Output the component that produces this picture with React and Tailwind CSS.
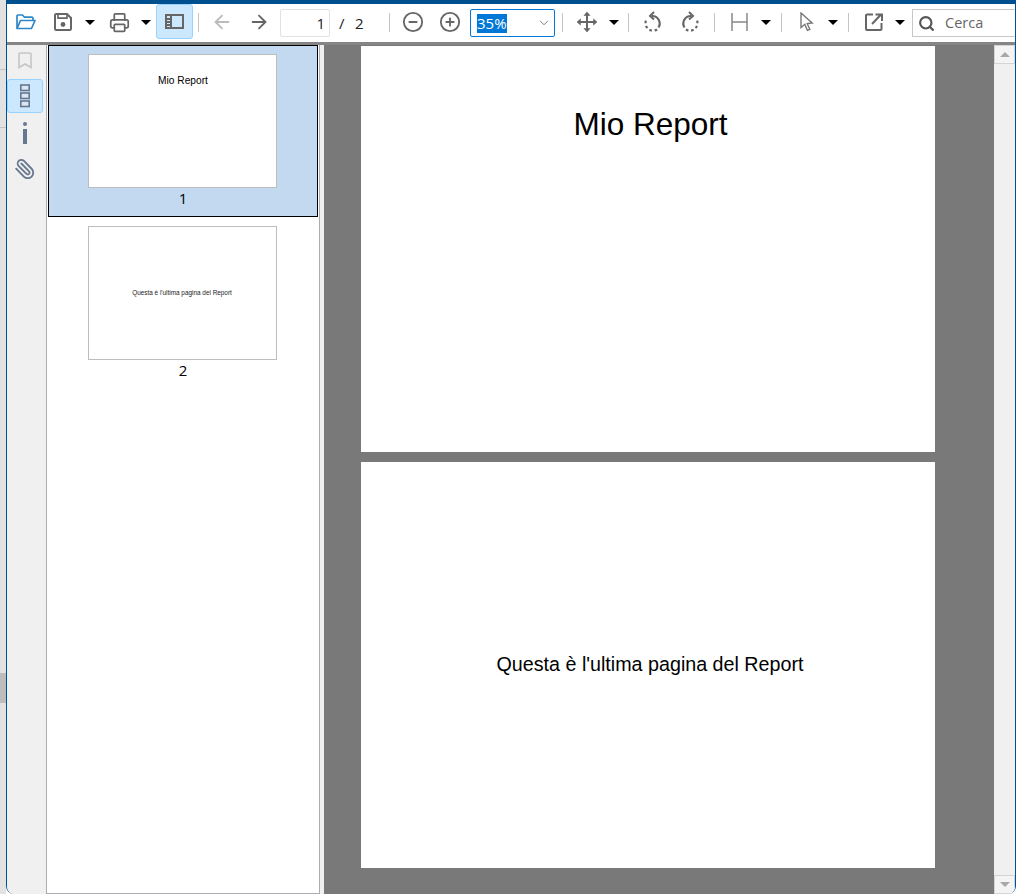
import {
  ArrowLeft,
  ArrowRight,
  ChevronDown,
  CircleMinus,
  CirclePlus,
  Paperclip,
  Printer,
  Search,
} from "lucide-react"

function Caret({ className = "" }) {
  return (
    <div className={`flex h-full w-4 items-center justify-center pb-[2px] ${className}`}>
      <div className="h-0 w-0 border-x-[5px] border-t-[5px] border-x-transparent border-t-black"></div>
    </div>
  )
}

function Sep({ className = "" }) {
  return <div className={`mb-px h-[19px] w-px bg-[#c4c4c4] ${className}`}></div>
}

function Tool({ children, className = "" }) {
  return <div className={`flex h-full items-center justify-center pb-[2px] ${className}`}>{children}</div>
}

function FolderIcon() {
  return (
    <svg width="20" height="16" viewBox="0 0 20 16" fill="none" stroke="#2f86c6" strokeWidth="1.7" strokeLinejoin="round">
      <path d="M1 14V2a1 1 0 0 1 1-1h4.5l2 2.2H16a1 1 0 0 1 1 1V6" />
      <path d="M1 14.5h14.5L19 6.5H4.5z" />
    </svg>
  )
}

function SaveIcon() {
  return (
    <svg width="18" height="18" viewBox="0 0 18 18" fill="none" stroke="#666" strokeWidth="2">
      <path d="M1 2.2A1.2 1.2 0 0 1 2.2 1H13l4 4v10.8a1.2 1.2 0 0 1-1.2 1.2H2.2A1.2 1.2 0 0 1 1 15.8z" />
      <path d="M4 1.5v3.6h9V1.5" strokeWidth="1.6" />
      <circle cx="9" cy="11.5" r="2.4" fill="#666" stroke="none" />
    </svg>
  )
}

function PanelIcon() {
  return (
    <svg width="19" height="15" viewBox="0 0 19 15" fill="none" stroke="#666" strokeWidth="2">
      <rect x="1" y="1" width="17" height="13" />
      <path d="M6 1v13" />
      <path d="M2 5h3M2 8h3M2 11h3" strokeWidth="1.8" />
    </svg>
  )
}

function MoveIcon() {
  return (
    <svg width="22" height="22" viewBox="0 0 22 22" fill="#666" stroke="#666" strokeWidth="2">
      <path d="M3 11h16M11 3v16" fill="none" />
      <path d="M11 1l3 3.5H8zM11 21l3-3.5H8zM1 11l3.5-3v6zM21 11l-3.5-3v6z" strokeWidth="0.6" />
    </svg>
  )
}

function RotateLeft() {
  return (
    <svg width="20" height="22" viewBox="0 0 20 22" fill="none" stroke="#666" strokeWidth="2.2">
      <path d="M9 5a7.5 7.5 0 0 1 6.5 11.5" />
      <path d="M11 1L7 5l4 3.5" strokeWidth="2" />
      <path d="M14 18.5a7.5 7.5 0 0 1-11-9" strokeDasharray="2.6 2.6" />
    </svg>
  )
}

function RotateRight() {
  return (
    <svg width="20" height="22" viewBox="0 0 20 22" fill="none" stroke="#666" strokeWidth="2.2">
      <path d="M11 5a7.5 7.5 0 0 0-6.5 11.5" />
      <path d="M9 1l4 4-4 3.5" strokeWidth="2" />
      <path d="M6 18.5a7.5 7.5 0 0 0 11-9" strokeDasharray="2.6 2.6" />
    </svg>
  )
}

function FitIcon() {
  return (
    <svg width="17" height="18" viewBox="0 0 17 18" fill="none" stroke="#888" strokeWidth="1.5">
      <path d="M1 0v18M16 0v18M1 9h15" />
    </svg>
  )
}

function CursorIcon() {
  return (
    <svg width="18" height="20" viewBox="0 0 18 20" fill="none" stroke="#777" strokeWidth="1.4">
      <path d="M3 1v14.5l3.8-3.2 2.6 6 2.4-1-2.6-5.8 5-.5z" />
    </svg>
  )
}

function ExternalIcon() {
  return (
    <svg width="18" height="18" viewBox="0 0 18 18" fill="none" stroke="#666" strokeWidth="2">
      <path d="M8 1.5H2a1 1 0 0 0-1 1V16a1 1 0 0 0 1 1h13.5a1 1 0 0 0 1-1v-6" />
      <path d="M7 11l9-9.5M10.5 1.5H17V8" />
    </svg>
  )
}

function BookmarkIcon() {
  return (
    <svg width="14" height="17" viewBox="0 0 14 17" fill="none" stroke="#c6c6c6" strokeWidth="1.6">
      <path d="M1 2a1 1 0 0 1 1-1h10a1 1 0 0 1 1 1v13.5l-6-3.5-6 3.5z" />
    </svg>
  )
}

function ThumbsIcon() {
  return (
    <svg width="12" height="24" viewBox="0 0 12 24" fill="none" stroke="#66788f" strokeWidth="1.6">
      <rect x="1.8" y="1" width="8.4" height="5.5" fill="#dbe6f2" />
      <rect x="1.8" y="9" width="8.4" height="5.5" fill="#dbe6f2" />
      <rect x="1.8" y="17" width="8.4" height="5.5" fill="#dbe6f2" />
    </svg>
  )
}

function Thumb({ children, top }) {
  return (
    <div className={`flex h-[134px] w-[189px] justify-center border border-[#bdbdbd] bg-white ${top ? "items-start pt-[19px]" : "items-center"}`}>
      {children}
    </div>
  )
}

function Toolbar() {
  return (
    <div className="flex h-[38px] items-center bg-white text-[#222]">
      <Tool className="w-[37px]"><FolderIcon /></Tool>
      <Tool className="w-[38px]"><SaveIcon /></Tool>
      <Caret />
      <Tool className="ml-[2px] w-[38px]"><Printer size={21} strokeWidth={2} color="#666" /></Tool>
      <Caret />
      <div className="mb-[3px] ml-[2px] flex h-[35px] w-[37px] items-center justify-center rounded-[3px] border border-[#99d1ff] bg-[#cce8ff]">
        <PanelIcon />
      </div>
      <Sep className="ml-[5px]" />
      <Tool className="ml-[5px] w-[36px]"><ArrowLeft size={22} strokeWidth={2} color="#bcbcbc" /></Tool>
      <Tool className="ml-px w-[36px]"><ArrowRight size={22} strokeWidth={2} color="#666" /></Tool>
      <div className="ml-[3px] h-[28px] w-[50px] rounded-[2px] border border-[#e2e2e2] pr-[4px] text-right text-[15px] leading-[26px]">1</div>
      <span className="ml-[9px] w-[16px] text-[15px]">/</span>
      <span className="w-[34px] text-[15px]">2</span>
      <Sep />
      <Tool className="ml-[4px] w-[37px]"><CircleMinus size={22} strokeWidth={2} color="#666" /></Tool>
      <Tool className="w-[37px]"><CirclePlus size={22} strokeWidth={2} color="#666" /></Tool>
      <div className="ml-[2px] flex h-[28px] w-[85px] items-center rounded-[2px] border border-[#0078d7] pl-[6px] pr-[3px]">
        <span className="bg-[#0078d7] text-[15px] leading-[19px] text-white">35%</span>
        <ChevronDown size={14} strokeWidth={1.5} color="#666" className="ml-auto" />
      </div>
      <Sep className="ml-[7px]" />
      <Tool className="ml-[5px] w-[38px]"><MoveIcon /></Tool>
      <Caret />
      <Sep className="ml-[6px]" />
      <Tool className="ml-[6px] w-[36px]"><RotateLeft /></Tool>
      <Tool className="w-[37px]"><RotateRight /></Tool>
      <Sep className="ml-[6px]" />
      <Tool className="ml-[6px] w-[37px]"><FitIcon /></Tool>
      <Caret />
      <Sep className="ml-[7px]" />
      <Tool className="ml-[6px] w-[37px]"><CursorIcon /></Tool>
      <Caret />
      <Sep className="ml-[7px]" />
      <Tool className="ml-[6px] w-[37px]"><ExternalIcon /></Tool>
      <Caret />
      <div className="ml-[4px] flex h-[28px] flex-1 items-center border border-y-[#c8c8c8] border-l-[#c8c8c8] border-r-transparent pl-[5px]">
        <Search size={17} strokeWidth={3} color="#555" />
        <span className="ml-[10px] text-[14.5px] text-[#666]">Cerca</span>
      </div>
    </div>
  )
}

function Sidebar() {
  return (
    <div className="flex w-[39px] flex-none flex-col items-center bg-[#f0f0f0] pr-[3px]">
      <div className="flex h-[30px] items-center justify-center">
        <BookmarkIcon />
      </div>
      <div className="mt-[4px] flex h-[34px] w-[36px] flex-none items-center justify-center rounded-[3px] border border-[#99d1ff] bg-[#cce8ff]">
        <ThumbsIcon />
      </div>
      <div className="mt-[9px] flex flex-col items-center">
        <div className="h-[4px] w-[4px] rounded-full bg-[#66788f]"></div>
        <div className="mt-[3px] h-[15px] w-[4px] bg-[#66788f]"></div>
      </div>
      <div className="mt-[14px]">
        <Paperclip size={22} strokeWidth={2} color="#66788f" className="-scale-x-100" />
      </div>
    </div>
  )
}

function ThumbPane() {
  return (
    <div className="flex w-[274px] flex-none flex-col border-x border-b border-[#acacb4] bg-white px-px">
      <div className="flex h-[172px] flex-none flex-col items-center border border-black bg-[#c2d9f0] pr-[2px] pt-[8px]">
        <Thumb top>
          <span className="ml-[2px] font-['Liberation_Sans'] text-[10.2px] leading-[14px] text-black">Mio Report</span>
        </Thumb>
        <div className="ml-[2px] text-[15px] leading-[21px] text-black">1</div>
      </div>
      <div className="flex flex-col items-center pr-[2px] pt-[9px]">
        <Thumb>
          <span className="font-['Liberation_Sans'] text-[6.4px] text-[#222]">Questa è l'ultima pagina del Report</span>
        </Thumb>
        <div className="ml-[2px] text-[15px] leading-[21px] text-black">2</div>
      </div>
    </div>
  )
}

function Viewer() {
  return (
    <div className="flex min-w-0 flex-1 flex-col overflow-hidden bg-[#797979] pl-[37px] pt-px">
      <div className="flex h-[406px] w-[574px] flex-none justify-center bg-white pl-[5px] pt-[54px]">
        <span className="font-['Liberation_Sans'] text-[31.5px] leading-[48px] text-black">Mio Report</span>
      </div>
      <div className="mt-[10px] flex h-[406px] w-[574px] flex-none items-center justify-center bg-white pl-[4px]">
        <span className="font-['Liberation_Sans'] text-[19.7px] text-black">Questa è l'ultima pagina del Report</span>
      </div>
    </div>
  )
}

function Scrollbar() {
  return (
    <div className="flex w-[21px] flex-none flex-col justify-between bg-[#f0f0f0]">
      <div className="flex h-[19px] items-center justify-center border border-[#d4d4d4] bg-[#f4f4f4]">
        <div className="h-0 w-0 border-x-[5px] border-b-[5px] border-x-transparent border-b-[#a8a8a8]"></div>
      </div>
      <div className="flex h-[19px] items-center justify-center border border-[#d4d4d4] bg-[#f4f4f4]">
        <div className="h-0 w-0 border-x-[5px] border-t-[5px] border-x-transparent border-t-[#a8a8a8]"></div>
      </div>
    </div>
  )
}

export default function App() {
  return (
    <div className="flex h-[894px] w-[1016px] overflow-hidden bg-white font-['Open_Sans','Liberation_Sans',sans-serif]">
      <div className="flex w-[6px] flex-none flex-col bg-[#e2e2e2]">
        <div className="mt-[69px] h-px flex-none bg-[#c4c4c4]"></div>
        <div className="mt-[57px] h-px flex-none bg-[#c4c4c4]"></div>
        <div className="mt-[545px] h-[30px] flex-none bg-[#bdbdbd]"></div>
      </div>
      <div className="flex min-w-0 flex-1 flex-col overflow-hidden rounded-b-[8px] border-x border-t-4 border-[#00508f] bg-[#f0f0f0]">
        <Toolbar />
        <div className="h-[3px] flex-none bg-[#858585]"></div>
        <div className="flex min-h-0 flex-1">
          <Sidebar />
          <ThumbPane />
          <div className="w-[4px] flex-none bg-[#f0f0f0]"></div>
          <Viewer />
          <Scrollbar />
        </div>
      </div>
    </div>
  )
}
